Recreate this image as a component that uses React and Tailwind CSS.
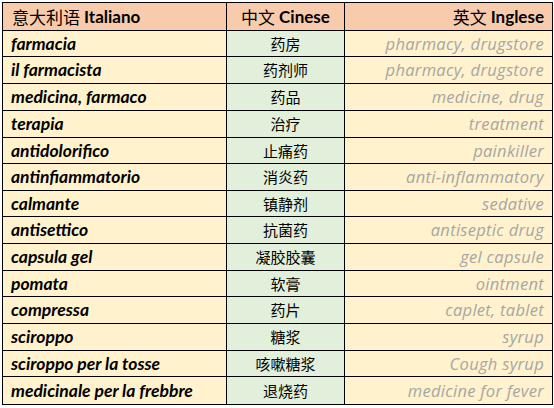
import React from "react";

const rows = [
  ["farmacia", "药房", "pharmacy, drugstore", "h-[26px]"],
  ["il farmacista", "药剂师", "pharmacy, drugstore", "h-[27px]"],
  ["medicina, farmaco", "药品", "medicine, drug", "h-[27px]"],
  ["terapia", "治疗", "treatment", "h-[27px]"],
  ["antidolorifico", "止痛药", "painkiller", "h-[26px]"],
  ["antinfiammatorio", "消炎药", "anti-inflammatory", "h-[27px]"],
  ["calmante", "镇静剂", "sedative", "h-[26px]"],
  ["antisettico", "抗菌药", "antiseptic drug", "h-[27px]"],
  ["capsula gel", "凝胶胶囊", "gel capsule", "h-[27px]"],
  ["pomata", "软膏", "ointment", "h-[26px]"],
  ["compressa", "药片", "caplet, tablet", "h-[27px]"],
  ["sciroppo", "糖浆", "syrup", "h-[27px]"],
  ["sciroppo per la tosse", "咳嗽糖浆", "Cough syrup", "h-[26px]"],
  ["medicinale per la frebbre", "退烧药", "medicine for fever", "h-[27px]"],
];

const latin = "font-['Lato','Noto_Sans_CJK_SC',sans-serif]";
const cjk = "font-['Noto_Sans_CJK_SC',sans-serif]";
const open = "font-['Open_Sans',sans-serif]";

export default function App() {
  return (
    <div className="w-[554px] h-[408px] bg-white pt-[2px] pl-[2px]">
      <div className="w-[551px] border border-black box-border flex flex-col">
        <div className="grid grid-cols-[224px_118px_207px] h-[28px] border-b border-black bg-[#F8CBAD] text-black text-[17px] font-bold leading-[20px]">
          <div className={`border-r border-black flex items-center pl-[9px] ${latin}`}>
            <span className={`${cjk} font-normal text-[17px] mr-[4px]`}>意大利语</span>
            <span>Italiano</span>
          </div>
          <div className={`border-r border-black flex items-center justify-center ${latin}`}>
            <span className={`${cjk} font-normal text-[17px] mr-[4px]`}>中文</span>
            <span>Cinese</span>
          </div>
          <div className={`flex items-center justify-end pr-[8px] ${latin}`}>
            <span className={`${cjk} font-normal text-[17px] mr-[4px]`}>英文</span>
            <span>Inglese</span>
          </div>
        </div>
        {rows.map(([it, zh, en, h], i) => (
          <div
            key={i}
            className={`grid grid-cols-[224px_118px_207px] overflow-hidden ${h} ${i < rows.length - 1 ? "border-b border-black" : ""}`}
          >
            <div className={`bg-[#FFF2CC] border-r border-black flex items-center pl-[8px] text-[17.5px] leading-[20px] font-bold italic text-black ${latin}`}>
              {it}
            </div>
            <div className={`bg-[#E2EFDA] border-r border-black flex items-center justify-center text-[15px] leading-[20px] text-black ${cjk}`}>
              {zh}
            </div>
            <div className={`bg-[#FFF2CC] flex items-center justify-end pr-[8px] text-[16.5px] leading-[20px] tracking-[0.3px] italic text-[#A6A6A6] ${open}`}>
              {en}
            </div>
          </div>
        ))}
      </div>
    </div>
  );
}
